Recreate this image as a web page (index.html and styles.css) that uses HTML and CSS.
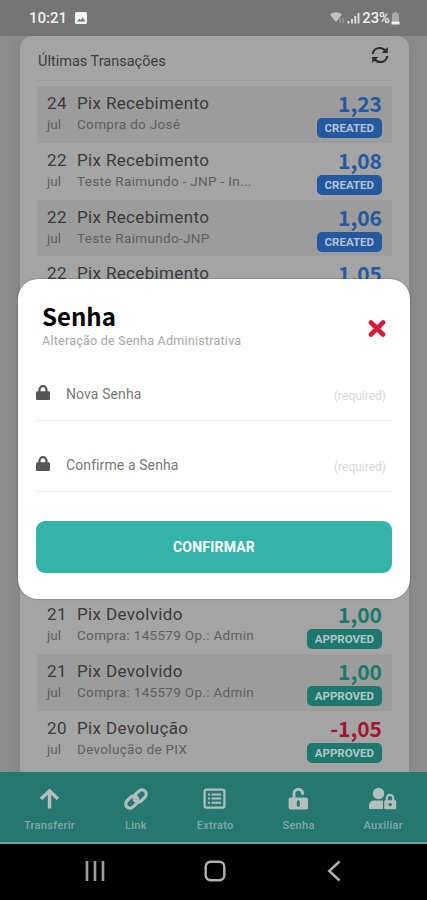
FILE: index.html
```html
<!DOCTYPE html>
<html lang="pt-BR">
<head>
  <meta charset="UTF-8">
  <meta name="viewport" content="width=device-width, initial-scale=1.0">
  <title>Senha</title>
  <link rel="stylesheet" href="styles.css">
</head>
<body>
  <header class="status">
    <span class="clock">10:21</span>
    <svg class="photo" width="12" height="12" viewBox="0 0 12 12"><rect width="12" height="12" rx="1.5" fill="#f2f2f2"/><path d="M2 9.5l2.300-3 1.500 1.800 2-2.700 2.500 3.900z" fill="#757575"/></svg>
    <div class="signals">
      <svg width="15" height="12" viewBox="0 0 15 12"><path d="M0 2.500Q6-2 12 2.500L6 10z" fill="#c2c2c2"/><path d="M10 6v5M13 6v5" stroke="#a0a0a0" stroke-width="1.200"/></svg>
      <svg width="13" height="12" viewBox="0 0 13 12"><path d="M1.500 9v2.500M5 7v4.500M8.300 4v7.500M11.500 1v10.500" stroke="#e4e4e4" stroke-width="1.800"/></svg>
      <span class="percent">23%</span>
      <svg width="9" height="13" viewBox="0 0 9 13"><path d="M3 0h3v1.500h2v8H1v-8h2z" fill="#a9a9a9"/><path d="M0.500 9.500h8V12.500h-8z" fill="#f4f4f4"/></svg>
    </div>
  </header>

  <main class="page">
    <section class="card">
      <div class="card-head">
        <h2>Últimas Transações</h2>
        <svg width="18" height="18" viewBox="0 0 18 18" fill="none" stroke="#2b2b2b" stroke-width="2.200"><path d="M1.800 8C2.200 4.300 5.200 2 8.800 2c2.600 0 4.500 1.200 5.800 3.200M16.200 10c-.4 3.700-3.400 6-7 6-2.600 0-4.500-1.200-5.800-3.200"/><path d="M16.800 1v6H10.800zM1.200 17v-6H7.200z" fill="#2b2b2b" stroke="none"/></svg>
      </div>
      <ul class="list">
        <li><div class="date"><b>24</b><small>jul</small></div><div class="info"><b>Pix Recebimento</b><small>Compra do José</small></div><div class="value blue"><strong>1,23</strong><em>CREATED</em></div></li>
        <li><div class="date"><b>22</b><small>jul</small></div><div class="info"><b>Pix Recebimento</b><small>Teste Raimundo - JNP - In...</small></div><div class="value blue"><strong>1,08</strong><em>CREATED</em></div></li>
        <li><div class="date"><b>22</b><small>jul</small></div><div class="info"><b>Pix Recebimento</b><small>Teste Raimundo-JNP</small></div><div class="value blue"><strong>1,06</strong><em>CREATED</em></div></li>
        <li><div class="date"><b>22</b></div><div class="info"><b>Pix Recebimento</b></div><div class="value blue"><strong>1,05</strong></div></li>
        <li></li>
        <li></li>
        <li></li>
        <li></li>
        <li></li>
        <li><div class="date"><b>21</b><small>jul</small></div><div class="info"><b>Pix Devolvido</b><small>Compra: 145579 Op.: Admin</small></div><div class="value green"><strong>1,00</strong><em>APPROVED</em></div></li>
        <li><div class="date"><b>21</b><small>jul</small></div><div class="info"><b>Pix Devolvido</b><small>Compra: 145579 Op.: Admin</small></div><div class="value green"><strong>1,00</strong><em>APPROVED</em></div></li>
        <li><div class="date"><b>20</b><small>jul</small></div><div class="info"><b>Pix Devolução</b><small>Devolução de PIX</small></div><div class="value green red"><strong>-1,05</strong><em>APPROVED</em></div></li>
      </ul>
    </section>
  </main>

  <nav class="tabs">
    <a><svg width="24" height="24" viewBox="0 0 24 24" fill="none" stroke="#b4bfbd" stroke-width="3.400"><path d="M12.500 21.500V4M4 12l8.500-8.200L21 12"/></svg><span>Transferir</span></a>
    <a><svg width="24" height="24" viewBox="0 0 24 24" fill="none" stroke="#b4bfbd" stroke-width="3.200"><g transform="rotate(-45 12 12)"><rect x="0" y="7" width="13.800" height="8.600" rx="4.300"/><rect x="10.200" y="8.400" width="13.800" height="8.600" rx="4.300"/></g></svg><span>Link</span></a>
    <a><svg width="24" height="24" viewBox="0 0 24 24" fill="none" stroke="#b4bfbd" stroke-width="2.200"><rect x="1.600" y="2.600" width="19.800" height="18" rx="1.800"/><path d="M5 7.500h2M8.500 7.500H18M5 11.600h2M8.500 11.600H18M5 15.700h2M8.500 15.700H18" stroke-width="2"/></svg><span>Extrato</span></a>
    <a><svg width="24" height="24" viewBox="0 0 24 24"><path d="M7 12V6.500a4.300 4.300 0 0 1 8.600 0v1.300" fill="none" stroke="#b4bfbd" stroke-width="2.900"/><path d="M3.500 10.500h15.600a1.900 1.900 0 0 1 1.900 1.900v8.200a1.900 1.900 0 0 1-1.900 1.900H3.500a1.900 1.900 0 0 1-1.900-1.900v-8.200a1.900 1.900 0 0 1 1.900-1.900z" fill="#b4bfbd"/><path d="M11.300 14.700v3.600" stroke="#24786f" stroke-width="3" stroke-linecap="round"/></svg><span>Senha</span></a>
    <a><svg width="28" height="24" viewBox="0 0 28 24"><circle cx="9.500" cy="6.500" r="5.700" fill="#b4bfbd"/><path d="M0 22v-3.200c0-3.300 2.400-5.300 5.500-5.300H14V22z" fill="#b4bfbd"/><path d="M17.800 14v-3a3.200 3.200 0 0 1 6.400 0v3" fill="none" stroke="#b4bfbd" stroke-width="2.200"/><rect x="15.200" y="13.200" width="12" height="9" rx="1.300" fill="#b4bfbd"/><circle cx="21.200" cy="17.600" r="1.700" fill="#24786f"/></svg><span>Auxiliar</span></a>
  </nav>

  <footer class="system">
    <svg width="20" height="22" viewBox="0 0 20 22"><path d="M2 1v20M10 1v20M18 1v20" stroke="#9d9d9d" stroke-width="2.600"/></svg>
    <svg class="home" width="22" height="22" viewBox="0 0 22 22"><rect x="1.700" y="1.700" width="18.600" height="18.600" rx="5" fill="none" stroke="#b2b2b2" stroke-width="2.400"/></svg>
    <svg width="14" height="22" viewBox="0 0 14 22"><path d="M12.500 1.500L2.200 11l10.300 9.500" fill="none" stroke="#b2b2b2" stroke-width="2.400"/></svg>
  </footer>

  <div class="modal">
    <div class="modal-head">
      <div>
        <h1>Senha</h1>
        <p>Alteração de Senha Administrativa</p>
      </div>
      <svg width="18" height="18" viewBox="0 0 18 18"><path d="M3 3.500l12 12M15 3.500L3 15.500" stroke="#d7193a" stroke-width="4.600" stroke-linecap="round"/></svg>
    </div>
    <div class="field">
      <svg width="14" height="16" viewBox="0 0 14 16"><path d="M3.500 8V4.700a3.500 3.500 0 0 1 7 0V8" fill="none" stroke="#555" stroke-width="2.200"/><rect y="6.300" width="14" height="8.700" rx="1.300" fill="#555"/></svg>
      <span>Nova Senha</span>
      <i>(required)</i>
    </div>
    <div class="field">
      <svg width="14" height="16" viewBox="0 0 14 16"><path d="M3.500 8V4.700a3.500 3.500 0 0 1 7 0V8" fill="none" stroke="#555" stroke-width="2.200"/><rect y="6.300" width="14" height="8.700" rx="1.300" fill="#555"/></svg>
      <span>Confirme a Senha</span>
      <i>(required)</i>
    </div>
    <button>CONFIRMAR</button>
  </div>
</body>
</html>
```
FILE: styles.css
```css
* { box-sizing: border-box; }
body { margin: 0; width: 427px; height: 900px; display: flex; flex-direction: column; overflow: hidden; font-family: Roboto, sans-serif; background: #8d8d8d; }
h1, h2, p, ul { margin: 0; padding: 0; }
svg { display: block; flex: none; }

.status { flex: none; height: 36px; padding: 0 27px 0 29px; display: flex; align-items: center; color: #f0f0f0; background: #757575; font-size: 15px; font-weight: 500; }
.photo { margin-left: 8px; }
.signals { margin-left: auto; display: flex; align-items: center; gap: 2px; }
.percent { margin-right: -1px; font-size: 14.800px; }

.page { flex: none; height: 736px; overflow: hidden; padding: 0 18px 0 20px; }
.card { height: 760px; padding: 0 17px; background: #a4a4a4; border-radius: 12px 12px 0 0; box-shadow: 0 0 16px rgba(0,0,0,0.1); }
.card-head { display: flex; justify-content: space-between; height: 45px; padding: 10px 3px 0 1px; border-bottom: 1px solid #9c9c9c; }
.card-head h2 { padding-top: 6px; font-size: 14.500px; font-weight: 400; line-height: 19px; color: #3d3d3d; }
.list { list-style: none; padding-top: 5px; }
.list li { display: flex; height: 56.800px; padding: 6px 10px 0 10px; }
.list li:nth-child(odd) { background: #9c9c9c; }
.list b, .list small { display: block; font-weight: 400; white-space: nowrap; }
.list b { font-size: 17px; line-height: 22px; color: #3a3a3a; letter-spacing: 0.350px; }
.list small { font-size: 13.500px; line-height: 21px; color: #5f5f5f; letter-spacing: 0.320px; }
.date { width: 30px; }
.date small { letter-spacing: 0; }
.value { margin-left: auto; display: flex; flex-direction: column; align-items: flex-end; }
.value strong { height: 26px; font: 700 21px/23px "Noto Sans CJK SC", sans-serif; }
.value em { height: 20px; padding: 0 8px; border-radius: 5px; font-style: normal; font-size: 11.500px; font-weight: 700; line-height: 20px; color: #b3c2d6; }
.blue strong { color: #24589f; }
.blue em { background: #24589f; }
.green strong { color: #197a6c; }
.green em { background: #1e786d; color: #b0c8c4; }
.red strong { color: #a21632; }

.tabs { flex: none; height: 72px; padding: 0 24px 0 24px; display: flex; justify-content: space-between; background: #24786f; border-bottom: 2px solid #71a29c; }
.tabs a { display: flex; flex-direction: column; align-items: center; padding-top: 15px; font-size: 11px; font-weight: 500; line-height: 14px; color: #82aaa5; letter-spacing: 0.300px; }
.tabs span { margin-top: 8px; }
.system { flex: 1; display: flex; justify-content: space-between; align-items: center; padding: 0 86px 2px 85px; background: #000; }
.home { margin-right: 3px; }

.modal { position: absolute; left: 18px; top: 279px; width: 392px; height: 320px; padding: 23px 18px 0; border-radius: 20px; background: #fff; box-shadow: 0 0 2px rgba(0,0,0,0.4); }
.modal-head { display: flex; justify-content: space-between; height: 64px; padding: 0 6px; }
.modal-head svg { margin-top: 17px; }
.modal h1 { height: 30px; font: 700 24px/27px "Noto Sans CJK SC", sans-serif; color: #000; }
.modal p { font-size: 12.500px; line-height: 17px; color: #a5a5a5; letter-spacing: 0.250px; }
.field { display: flex; align-items: center; height: 55px; border-bottom: 1px solid #ececec; margin-bottom: 16px; padding: 0 6px 1px 0; }
.field span { margin-left: 16px; padding-top: 2px; font-size: 14px; color: #777; letter-spacing: 0.100px; }
.field i { margin-left: auto; padding-top: 7px; font-size: 12px; font-style: normal; color: #d6d6d6; }
.modal button { display: block; width: 356px; height: 52px; margin-top: 29px; border: 0; border-radius: 9px; background: #36b3a8; color: #fff; font: 700 14px Roboto, sans-serif; letter-spacing: 0.200px; }
```
